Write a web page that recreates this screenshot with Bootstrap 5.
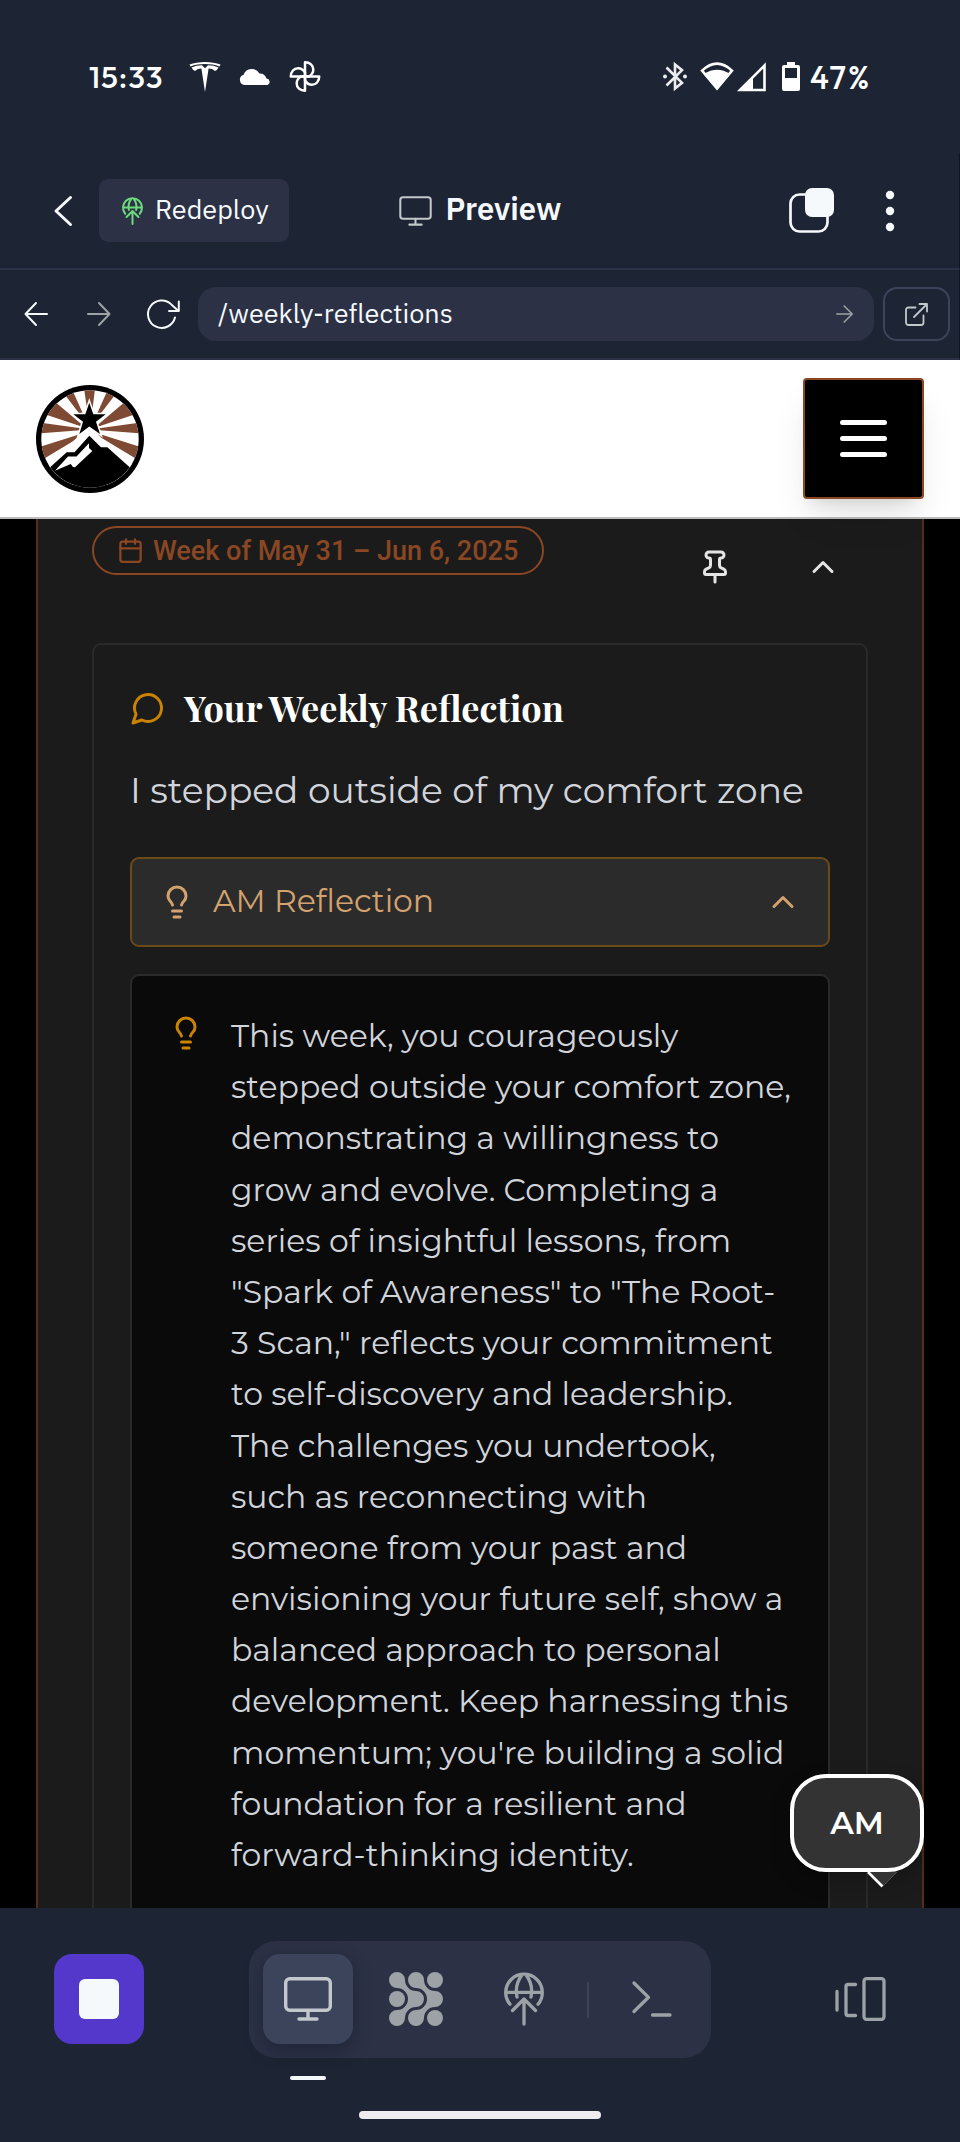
<!DOCTYPE html>
<html lang="en">
<head>
<meta charset="utf-8">
<meta name="viewport" content="width=device-width, initial-scale=1">
<title>Weekly Reflections</title>
<link rel="stylesheet" href="https://cdn.jsdelivr.net/npm/bootstrap@5.3.0/dist/css/bootstrap.min.css">
<style>
  :root { --root:#1d2433; --raised:#2c3145; --line:#3c445c; --fg:#f5f9fc; --dim:#c2c8cc; --dimmer:#9da2a6; --rust:#8a4723; --amber:#c98300; --tan:#d4a26e; }
  body { background:#000; color:#d1d5db; height:2142px; overflow:hidden; }
  svg { display:block; flex:none; overflow:visible; }
  .ln { fill:none; stroke:currentColor; stroke-width:2; stroke-linecap:round; stroke-linejoin:round; }
  .txt { white-space:nowrap; }
  .shell { background:var(--root); color:var(--fg); }
  .plex { font-family:"IBM Plex Sans","Noto Sans",sans-serif; font-size:27px; }
  .mont { font-family:Montserrat,Inter,sans-serif; font-weight:400; }

  .status { height:153px; padding:0 89px; color:#fff; }
  .clock { font:500 31px/36px Outfit,Inter,sans-serif; letter-spacing:.95px; width:101px; }
  .pct { font:500 31.5px/36px Outfit,Inter,sans-serif; letter-spacing:2.2px; width:61px; margin-left:10px; }

  .toolbar { height:115px; border-right:1px solid #0e1525; padding:0 65px 0 54px; }
  .redeploy { width:190px; height:63px; border-radius:9px; background:var(--raised); padding-left:23px; gap:12px; margin-left:27px; }
  .redeploy .txt { margin-top:-2px; }
  .heading { font-size:31px; font-weight:600; margin:-2px 0 0 13.5px; }

  .urlrow { height:92px; border-top:2px solid var(--raised); border-bottom:2px solid var(--raised); border-right:1px solid #0e1525; padding:17px 9px 0 24px; }
  .field { width:676px; height:54px; border-radius:18px; background:var(--raised); padding:0 21px 0 20px; }
  .field .txt { margin-top:-2px; }
  .ext { width:67px; height:54px; border:2px solid var(--line); border-radius:14px; color:var(--dim); }

  .site { height:159px; background:#fff; border-bottom:2px solid #bcbcbc; padding:0 36px; }
  .burger { width:121px; height:121px; background:#000; border:2px solid var(--rust); border-radius:4px; gap:10.3px; box-shadow:0 22px 34px -7px rgba(0,0,0,.12),0 9px 14px -9px rgba(0,0,0,.12); }
  .burger i { width:47px; height:5.5px; border-radius:3px; background:#fff; }

  .view { height:1389px; overflow:hidden; padding:0 36px; }
  .outer { background:#1b1b1b; border:solid #522d1c; border-width:0 2px; padding:7px 54px 0; height:1389px; }
  .weekhead { height:117px; }
  .week { width:452px; height:49px; border:2px solid var(--rust); border-radius:25px; color:var(--rust); padding-left:23px; gap:9px; font:500 27px/45px Roboto,sans-serif; }
  .week .txt { padding-top:1px; }
  .tools { color:#e5e5e5; padding:23px 27px 0 0; gap:72px; }
  .inner { border:2px solid #2a2a2a; border-radius:9px; padding:43px 36px 0; height:1400px; }
  .title { height:40px; font:700 36px/40px "Playfair Display","Liberation Serif",serif; color:#fff; gap:18px; }
  .title .txt { margin-top:-2px; }
  .quote { font-size:36px; line-height:44px; margin:40px 0 45px; }
  .amrow { height:90px; background:#2b2b2b; border:2px solid #6a4a18; border-radius:9px; color:var(--tan); padding:0 27px; gap:18px; font-size:31.5px; }
  .amrow .txt { margin-top:-1px; }
  .note { background:#0a0a0a; border:2px solid #2a2a2a; border-radius:9px; margin-top:27px; padding:35px 0 0 36px; gap:27px; height:1100px; }
  .note svg { margin-top:4px; color:var(--amber); }
  .para { font-size:31.5px; line-height:51.19px; }

  .bubble { width:134px; height:98px; right:36px; top:1774px; background:#333; border:4px solid #fff; border-radius:36px; font:600 31.5px/91px Montserrat,Inter,sans-serif; color:#fff; text-align:center; box-shadow:0 8px 20px rgba(0,0,0,.25); }
  .bubble svg { left:73px; top:93px; }

  .dock { height:234px; padding:33px 54px 0; }
  .stop { width:90px; height:90px; border-radius:18px; background:#5338cb; margin-bottom:1px; }
  .stop i { width:40px; height:40px; border-radius:6px; background:var(--fg); }
  .pill { width:462px; height:117px; border-radius:27px; background:var(--raised); padding:0 14px; gap:18px; color:var(--dimmer); }
  .tab { width:90px; height:90px; border-radius:17px; margin-bottom:1px; }
  .tab.on { background:var(--line); color:var(--dim); box-shadow:0 6px 18px rgba(10,16,32,.35); }
  .split { width:2px; height:36px; background:var(--line); }
  .under { width:36px; height:4px; border-radius:2px; background:var(--fg); left:290px; top:168px; }
  .home { width:242px; height:8px; border-radius:4px; background:#ededf0; left:359px; top:203px; }
</style>
</head>
<body class="position-relative">

<header class="shell status d-flex align-items-center">
  <span class="clock txt">15:33</span>
  <svg width="30" height="30" viewBox="0 0 30 30" fill="currentColor"><path d="M-.5 2.600C8-.8 22-.8 30.500 2.600L29.500 4.400C21 1.300 9 1.300.5 4.400Z"/><path d="M1.500 5.400Q6 3.300 12 3.200L15 6.300 18 3.200Q24 3.300 28.500 5.400 27 8.400 25 9 22 6.500 18.600 6.600L15 30 11.400 6.600Q8 6.500 5 9 3 8.400 1.500 5.400Z"/></svg>
  <svg style="margin-left:19px" width="32" height="17" viewBox="0 0 32 17" fill="currentColor"><path d="M5.500 17A5.300 5.300 0 0 1 4.600 6.700 8.800 8.800 0 0 1 20.500 5.600 6.600 6.600 0 0 1 27.500 10.600 3.300 3.300 0 0 1 28.500 17Z"/></svg>
  <svg style="margin-left:18px" width="32" height="31" viewBox="0 0 32 31" fill="none" stroke="currentColor" stroke-width="2.500" stroke-linejoin="round"><g id="petal"><path d="M16 15.500V1.300C21 1.300 24.300 4.500 24.300 8.600 24.300 11.500 22.500 14 20 15.500Z"/></g><use href="#petal" transform="rotate(90 16 15.500)"/><use href="#petal" transform="rotate(180 16 15.500)"/><use href="#petal" transform="rotate(270 16 15.500)"/></svg>
  <svg class="ms-auto" width="24" height="29" viewBox="0 0 24 29" fill="none" stroke="currentColor" stroke-width="2.600" opacity=".92"><path d="M3.500 5.500 19 20.800 12 26.500V2.500L19 8.200 3.500 23.500"/><circle cx="2" cy="14.500" r="2" fill="currentColor" stroke="none"/><circle cx="22" cy="14.500" r="2" fill="currentColor" stroke="none"/></svg>
  <svg style="margin-left:13px" width="34" height="29" viewBox="0 0 34 29"><path d="M17 26.500 2 8.700Q17-5.300 32 8.700Z" fill="none" stroke="currentColor" stroke-width="2.600"/><path d="M17 28 3.800 12Q17 3.500 30.200 12Z" fill="currentColor"/></svg>
  <svg style="margin-left:3px" width="29" height="30" viewBox="0 0 29 30"><path d="M27.500 3.500V28H3Z" fill="none" stroke="currentColor" stroke-width="2.600"/><path d="M16 14V28H2.500Z" fill="currentColor"/></svg>
  <svg style="margin-left:16px" width="18" height="29" viewBox="0 0 18 29" fill="currentColor"><path fill-rule="evenodd" d="M5 0H13V3H16A2 2 0 0 1 18 5V27A2 2 0 0 1 16 29H2A2 2 0 0 1 0 27V5A2 2 0 0 1 2 3H5ZM3 6V16H15V6Z"/></svg>
  <span class="pct txt">47%</span>
</header>

<nav class="shell toolbar plex d-flex align-items-center">
  <svg width="18" height="30" viewBox="0 0 18 30" class="ln" style="stroke-width:3"><path d="M16.500 1.500 2 15 16.500 28.500"/></svg>
  <div class="redeploy d-flex align-items-center">
    <svg width="21" height="28" viewBox="0 0 40 54" class="ln" style="color:#6bd97c;stroke-width:3.900"><use href="#globe"/></svg>
    <span class="txt">Redeploy</span>
  </div>
  <svg width="33" height="30" viewBox="0 0 48 44" class="ln" style="margin-left:110px;color:var(--dim);stroke-width:3"><use href="#monitor"/></svg>
  <span class="txt heading">Preview</span>
  <svg class="ms-auto" width="45" height="45" viewBox="0 0 45 45"><rect x="1.500" y="6.500" width="37" height="37" rx="9" fill="none" stroke="currentColor" stroke-width="2.700"/><rect x="16" y="0" width="29" height="29" rx="7" fill="currentColor"/></svg>
  <svg style="margin-left:52px" width="8" height="40" viewBox="0 0 8 40" fill="currentColor"><circle cx="4" cy="4" r="4.200"/><circle cx="4" cy="20" r="4.200"/><circle cx="4" cy="36" r="4.200"/></svg>
</nav>

<div class="shell urlrow plex d-flex align-items-start">
  <div class="d-flex align-items-center" style="height:54px">
    <svg width="24" height="24" viewBox="0 0 24 24" class="ln"><path d="M23 12H1.500M12 1 1.500 12 12 23"/></svg>
    <svg style="margin-left:39px;color:var(--dimmer)" width="24" height="24" viewBox="0 0 24 24" class="ln"><path d="M1 12H22.500M12 1 22.500 12 12 23"/></svg>
    <svg style="margin-left:36px" width="33" height="30" viewBox="0 0 33 30" class="ln"><path d="M31.800 2.500V12H22M31.500 12 24.300 5.400A13.700 13.700 0 1 0 28 18.500"/></svg>
  </div>
  <div class="field d-flex align-items-center justify-content-between" style="margin-left:18px">
    <span class="txt">/weekly-reflections</span>
    <svg width="17" height="18" viewBox="0 0 17 18" class="ln" style="color:var(--dimmer);stroke-width:1.600"><path d="M.8 9H16.200M8.200 1 16.200 9 8.200 17"/></svg>
  </div>
  <div class="ext d-flex align-items-center justify-content-center ms-auto">
    <svg width="23" height="23" viewBox="0 0 23 23" class="ln" style="stroke-width:1.800"><path d="M10.500 4.500H3.500A2.500 2.500 0 0 0 1 7V19.500A2.500 2.500 0 0 0 3.500 22H16A2.500 2.500 0 0 0 18.500 19.500V12.500M9 14 21.500 1.500M14.500 1H22V8.500"/></svg>
  </div>
</div>

<div class="site d-flex align-items-center justify-content-between">
  <svg width="108" height="108" viewBox="0 0 108 108">
    <defs><clipPath id="disc"><circle cx="54" cy="54" r="48.700"/></clipPath></defs>
    <circle cx="54" cy="54" r="54"/><circle cx="54" cy="54" r="48.700" fill="#fff"/>
    <g clip-path="url(#disc)">
      <path fill="#7f4a33" d="M54 44 47.500 0H59.500ZM52 40 26 6 35 2ZM56 40 82 6 73 2ZM50 43 8 29 18 16ZM58 43 100 29 90 16ZM54 44.500 0 37V48.500ZM54 44.500 108 37V48.500ZM54 46 0 63 4 76ZM54 46 108 63 104 76Z"/>
      <path fill="#fff" stroke="#fff" stroke-width="3" d="M53.300 17.700 57.300 29.300H69.700L60 36.800 64 49 53.300 41.500 43.300 49 47 36.800 37.300 29.300H49.300Z"/>
      <path fill="#fff" d="M53.300 41 70 57.500 97 79V100H8V84L40 53.500Z"/>
      <path d="M53.300 17.700 57.300 29.300H69.700L60 36.800 64 49 53.300 41.500 43.300 49 47 36.800 37.300 29.300H49.300Z"/>
      <path d="M53.300 50.700 65 62.300H71.300L94 82.500 108 108H0V95L30.700 67.300H38.500Z"/>
      <path fill="#fff" d="M53 58.300V63L56.300 66 39 82.300 37 82 34.700 79 19 85.700 32 71.500H40.500Z"/>
    </g>
  </svg>
  <div class="burger d-flex flex-column align-items-center justify-content-center"><i></i><i></i><i></i></div>
</div>

<main class="view">
  <div class="outer">
    <div class="weekhead d-flex justify-content-between align-items-start">
      <div class="week d-flex align-items-center">
        <svg width="27" height="27" viewBox="0 0 24 24" class="ln"><path d="M8 2v4M16 2v4M3 10h18"/><rect x="3" y="4" width="18" height="18" rx="2"/></svg>
        <span class="txt">Week of May 31 – Jun 6, 2025</span>
      </div>
      <div class="tools d-flex">
        <svg width="36" height="36" viewBox="0 0 24 24" class="ln"><path d="M12 17v5M9 10.760a2 2 0 0 1-1.110 1.790l-1.780.9A2 2 0 0 0 5 15.240V16a1 1 0 0 0 1 1h12a1 1 0 0 0 1-1v-.76a2 2 0 0 0-1.110-1.790l-1.780-.9A2 2 0 0 1 15 10.760V7a1 1 0 0 1 1-1 2 2 0 0 0 0-4H8a2 2 0 0 0 0 4 1 1 0 0 1 1 1z"/></svg>
        <svg width="36" height="36" viewBox="0 0 24 24" class="ln"><path d="m18 15-6-6-6 6"/></svg>
      </div>
    </div>
    <div class="inner">
      <div class="title d-flex align-items-center">
        <svg width="36" height="36" viewBox="0 0 24 24" class="ln" style="color:var(--amber)"><path d="M7.900 20A9 9 0 1 0 4 16.100L2 22Z"/></svg>
        <span class="txt">Your Weekly Reflection</span>
      </div>
      <div class="mont quote txt">I stepped outside of my comfort zone</div>
      <div class="amrow mont d-flex align-items-center">
        <svg width="36" height="36" viewBox="0 0 24 24" class="ln"><path id="bulb" d="M15 14c.2-1 .7-1.700 1.500-2.500 1-.9 1.500-2.200 1.500-3.500A6 6 0 0 0 6 8c0 1 .2 2.200 1.500 3.500.7.7 1.300 1.500 1.500 2.500M9 18h6M10 22h4"/></svg>
        <span class="txt">AM Reflection</span>
        <svg class="ln ms-auto" width="36" height="36" viewBox="0 0 24 24"><path d="m18 15-6-6-6 6"/></svg>
      </div>
      <div class="note d-flex align-items-start">
        <svg width="36" height="36" viewBox="0 0 24 24" class="ln"><use href="#bulb"/></svg>
        <div class="mont para txt">This week, you courageously<br>stepped outside your comfort zone,<br>demonstrating a willingness to<br>grow and evolve. Completing a<br>series of insightful lessons, from<br>"Spark of Awareness" to "The Root-<br>3 Scan," reflects your commitment<br>to self-discovery and leadership.<br>The challenges you undertook,<br>such as reconnecting with<br>someone from your past and<br>envisioning your future self, show a<br>balanced approach to personal<br>development. Keep harnessing this<br>momentum; you're building a solid<br>foundation for a resilient and<br>forward-thinking identity.</div>
      </div>
    </div>
  </div>
</main>

<div class="bubble position-absolute">AM
  <svg class="position-absolute" width="32" height="17" viewBox="0 0 32 17"><path d="M1 1H30L16 15.500Z" fill="#333"/><path d="M1 1 15.500 15.500" stroke="#fff" stroke-width="2.600"/><path d="M15.500 15.500 30 1" stroke="#666" stroke-width=".6"/></svg>
</div>

<footer class="shell dock position-relative">
  <div class="d-flex align-items-center justify-content-between">
    <div class="stop d-flex align-items-center justify-content-center"><i></i></div>
    <div class="pill d-flex align-items-center">
      <div class="tab on d-flex align-items-center justify-content-center">
        <svg width="48" height="44" viewBox="0 0 48 44" class="ln" style="stroke-width:3.400"><g id="monitor"><rect x="1.700" y="1.700" width="44.600" height="31.600" rx="4"/><path d="M24 33.500V42M15 42H33"/></g></svg>
      </div>
      <div class="tab d-flex align-items-center justify-content-center">
        <svg width="54" height="54" viewBox="0 0 54 54" fill="currentColor"><path id="chain" d="M16 8A11 11 0 0 0 27 19 8 8 0 0 1 27 35 11 11 0 0 0 16 46 8 8 0 1 1 8 38 11 11 0 0 0 19 27 11 11 0 0 0 8 16 8 8 0 1 1 16 8Z"/><use href="#chain" x="19"/><circle cx="8" cy="27" r="8"/><circle cx="46" cy="8" r="8"/><circle cx="46" cy="46" r="8"/></svg>
      </div>
      <div class="tab d-flex align-items-center justify-content-center">
        <svg width="40" height="54" viewBox="0 0 40 54" class="ln" style="stroke-width:3.300"><g id="globe"><path d="M6 32.300A18.300 18.300 0 1 1 34 32.300M2 20.300H38M18 3C12.500 10 11.500 18 13 25M22 3C27.500 10 28.500 18 27 25M20 27.500V52M8.500 38.500 20 27 31.500 38.500"/></g></svg>
      </div>
      <div class="split"></div>
      <div class="tab d-flex align-items-center justify-content-center">
        <svg width="40" height="36" viewBox="0 0 40 36" class="ln" style="stroke-width:3.300"><path d="M2 2 16.500 16.300 2 30.500M20.500 34H38"/></svg>
      </div>
    </div>
    <div class="tab d-flex align-items-center justify-content-center" style="color:var(--dimmer)">
      <svg width="52" height="44" viewBox="0 0 52 44" class="ln" style="stroke-width:3.300"><path d="M2 14.500V33M20.500 7.500H13A2 2 0 0 0 11 9.500V36.500A2 2 0 0 0 13 38.500H20.500"/><rect x="29" y="1.700" width="20" height="40.600" rx="2.500"/></svg>
    </div>
  </div>
  <div class="under position-absolute"></div>
  <div class="home position-absolute"></div>
</footer>

<script src="https://cdn.jsdelivr.net/npm/bootstrap@5.3.0/dist/js/bootstrap.bundle.min.js"></script>
</body>
</html>
